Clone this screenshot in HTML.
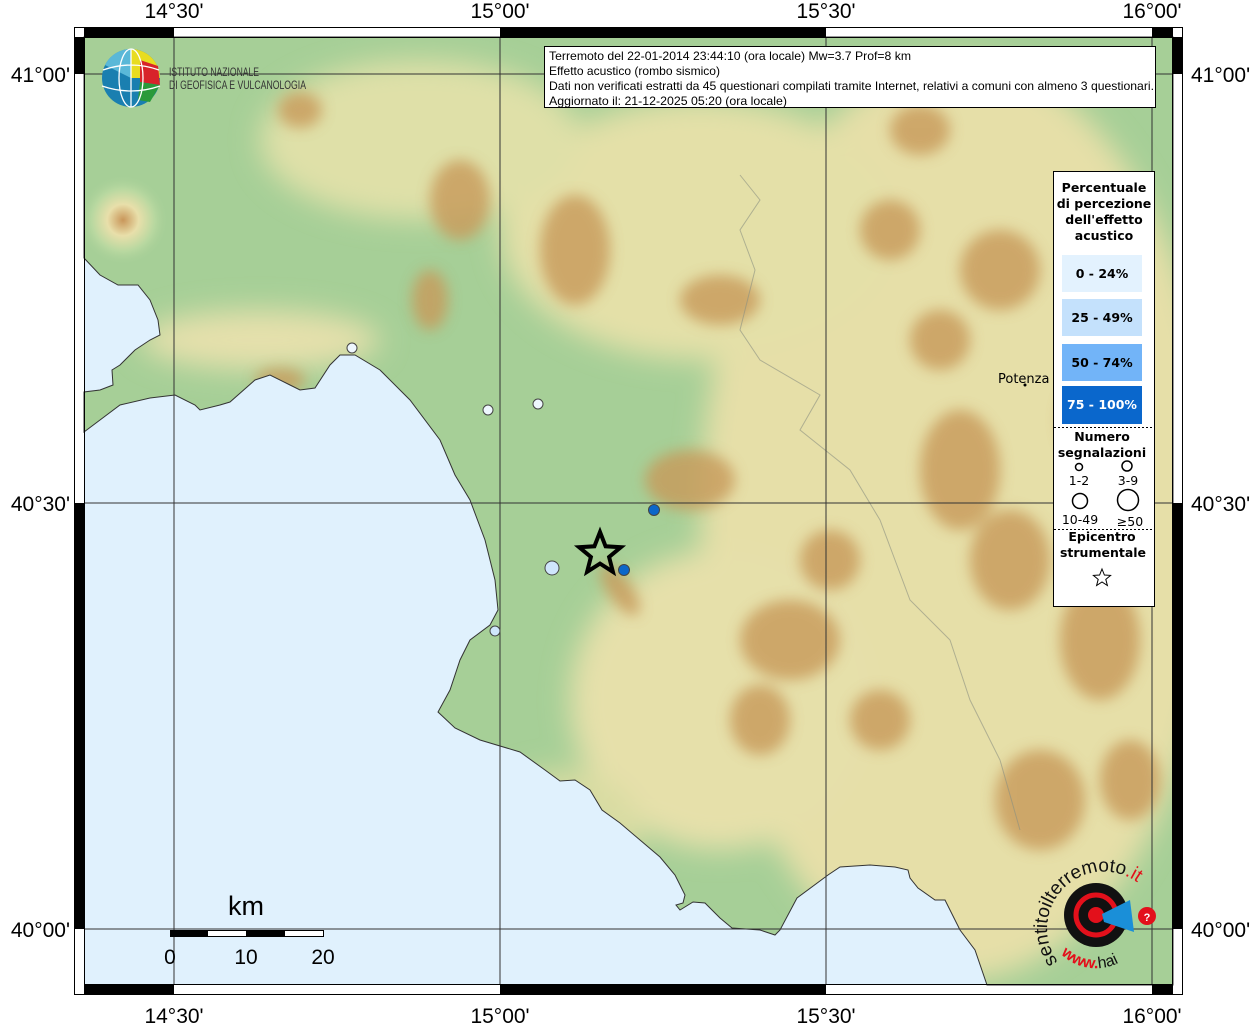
<!DOCTYPE html>
<html><head><meta charset="utf-8"><style>
html,body{margin:0;padding:0;background:#fff;width:1256px;height:1024px;overflow:hidden}
svg{display:block;font-family:"Liberation Sans",sans-serif}
.dj{font-family:"DejaVu Sans",sans-serif}
.nr{font-family:"Liberation Sans Narrow","Liberation Sans",sans-serif}
</style></head><body>
<svg width="1256" height="1024" viewBox="0 0 1256 1024" xmlns="http://www.w3.org/2000/svg">
<defs>
<filter id="b1" x="-50%" y="-50%" width="200%" height="200%"><feGaussianBlur stdDeviation="14"/></filter>
<filter id="b2" x="-50%" y="-50%" width="200%" height="200%"><feGaussianBlur stdDeviation="7"/></filter>
<clipPath id="land"><path id="lp" d="M84,37 L1173,37 L1173,985 L987,985 L975,950 L960,930 L945,900 L935,900 L918,888 L910,878 L908,870 L895,867 L870,865 L840,867 L828,875 L797,898 L780,930 L775,935 L760,930 L732,928 L720,918 L705,903 L693,902 L680,910 L676,905 L683,903 L685,895 L675,875 L660,857 L640,840 L620,823 L602,810 L590,790 L575,780 L560,781 L545,770 L520,752 L480,740 L455,728 L438,712 L450,690 L460,660 L470,640 L490,625 L498,610 L495,580 L485,540 L470,500 L455,475 L440,440 L410,400 L380,370 L355,355 L340,355 L330,365 L315,388 L300,390 L290,385 L270,375 L255,380 L230,402 L220,405 L200,410 L195,405 L175,395 L150,398 L120,405 L100,420 L84,432 L84,392 L100,390 L113,385 L112,370 L120,365 L135,350 L150,340 L160,335 L158,320 L150,300 L138,285 L118,285 L100,275 L84,258 Z"/></clipPath>
<radialGradient id="vol" cx="0.5" cy="0.5" r="0.5"><stop offset="0" stop-color="#c9965a"/><stop offset="0.35" stop-color="#e8dfaa"/><stop offset="0.7" stop-color="#b8d8a0"/><stop offset="1" stop-color="#a8cf98" stop-opacity="0"/></radialGradient>
</defs>
<rect x="84" y="37" width="1089" height="948" fill="#e0f1fd"/>
<g clip-path="url(#land)">
<rect x="84" y="37" width="1089" height="948" fill="#a6cf97"/>
<g filter="url(#b1)">
<ellipse cx="960" cy="520" rx="260" ry="460" fill="#e6dfa8"/>
<ellipse cx="700" cy="230" rx="200" ry="130" fill="#e4e0a8"/>
<ellipse cx="720" cy="700" rx="150" ry="150" fill="#e6e0aa"/>
<ellipse cx="420" cy="140" rx="160" ry="80" fill="#dfe0a8"/>
<ellipse cx="260" cy="340" rx="120" ry="30" fill="#e5e0ac"/>
<ellipse cx="560" cy="830" rx="80" ry="60" fill="#d8dca2"/>
</g>
<g filter="url(#b2)" fill="#c89a5a" opacity="0.8">
<ellipse cx="460" cy="200" rx="30" ry="40"/>
<ellipse cx="575" cy="250" rx="35" ry="55"/>
<ellipse cx="300" cy="110" rx="22" ry="18"/>
<ellipse cx="720" cy="300" rx="40" ry="25"/>
<ellipse cx="690" cy="480" rx="45" ry="30"/>
<ellipse cx="790" cy="640" rx="50" ry="40"/>
<ellipse cx="760" cy="720" rx="30" ry="35"/>
<ellipse cx="960" cy="470" rx="40" ry="60"/>
<ellipse cx="1010" cy="560" rx="40" ry="50"/>
<ellipse cx="1100" cy="640" rx="40" ry="60"/>
<ellipse cx="1040" cy="800" rx="45" ry="50"/>
<ellipse cx="1130" cy="780" rx="30" ry="40"/>
<ellipse cx="890" cy="230" rx="30" ry="30"/>
<ellipse cx="920" cy="130" rx="30" ry="25"/>
<ellipse cx="1000" cy="270" rx="40" ry="40"/>
<ellipse cx="940" cy="340" rx="30" ry="30"/>
<ellipse cx="1100" cy="420" rx="40" ry="50"/>
<ellipse cx="880" cy="720" rx="30" ry="30"/>
<ellipse cx="620" cy="590" rx="12" ry="30" transform="rotate(-35 620 590)"/>
<ellipse cx="280" cy="380" rx="25" ry="12"/>
<ellipse cx="430" cy="300" rx="18" ry="30"/>
<ellipse cx="830" cy="560" rx="30" ry="30"/>
</g>
<circle cx="123" cy="220" r="45" fill="url(#vol)"/>
<polyline points="740,175 760,200 740,230 755,270 740,330 760,360 820,395 800,430 850,470 880,520 910,600 950,640 970,700 1000,760 1020,830" fill="none" stroke="#8a8f80" stroke-width="1" opacity="0.6"/>
</g>
<use href="#lp" fill="none" stroke="#333" stroke-width="1"/>
<g stroke="#333" stroke-width="1">
<line x1="174" y1="37" x2="174" y2="985"/><line x1="500" y1="37" x2="500" y2="985"/><line x1="826" y1="37" x2="826" y2="985"/><line x1="1152" y1="37" x2="1152" y2="985"/>
<line x1="84" y1="74" x2="1173" y2="74"/><line x1="84" y1="503" x2="1173" y2="503"/><line x1="84" y1="929" x2="1173" y2="929"/>
</g>
<rect x="74.5" y="27.5" width="1108" height="967" fill="none" stroke="#000" stroke-width="1"/>
<rect x="84.5" y="37.5" width="1088" height="947" fill="none" stroke="#000" stroke-width="1"/>
<g fill="#000">
<rect x="84" y="27" width="90" height="10"/><rect x="500" y="27" width="326" height="10"/><rect x="1152" y="27" width="21" height="10"/>
<rect x="84" y="985" width="90" height="10"/><rect x="500" y="985" width="326" height="10"/><rect x="1152" y="985" width="21" height="10"/>
<rect x="74" y="37" width="10" height="37"/><rect x="74" y="503" width="10" height="426"/>
<rect x="1173" y="37" width="10" height="37"/><rect x="1173" y="503" width="10" height="426"/>
</g>
<g font-size="21" fill="#000">
<text x="174" y="18" text-anchor="middle">14°30'</text><text x="500" y="18" text-anchor="middle">15°00'</text><text x="826" y="18" text-anchor="middle">15°30'</text><text x="1152" y="18" text-anchor="middle">16°00'</text>
<text x="174" y="1023" text-anchor="middle">14°30'</text><text x="500" y="1023" text-anchor="middle">15°00'</text><text x="826" y="1023" text-anchor="middle">15°30'</text><text x="1152" y="1023" text-anchor="middle">16°00'</text>
<text x="70" y="82" text-anchor="end">41°00'</text><text x="70" y="511" text-anchor="end">40°30'</text><text x="70" y="937" text-anchor="end">40°00'</text>
<text x="1191" y="82">41°00'</text><text x="1191" y="511">40°30'</text><text x="1191" y="937">40°00'</text>
</g>
<circle cx="131" cy="78" r="29" fill="#1a7fb0"/>
<path d="M131,49 A29,29 0 0 1 160,78 L131,78 Z" fill="#e8dc20"/>
<path d="M140,60 L158,66 L160,85 L140,82 Z" fill="#d8232a"/>
<path d="M140,82 L160,85 L150,102 L138,100 Z" fill="#2a9a3a"/>
<path d="M131,49 A29,29 0 0 0 105,65 L131,78 Z" fill="#5ab8d8"/>
<g stroke="#fff" stroke-width="1.3" fill="none"><ellipse cx="131" cy="78" rx="12" ry="29"/><path d="M103,70 Q131,60 159,70 M102,86 Q131,96 160,86 M131,49 V107"/></g>
<text class="nr" x="169" y="76" font-size="12" fill="#333" textLength="90" lengthAdjust="spacingAndGlyphs">ISTITUTO NAZIONALE</text>
<text class="nr" x="169" y="89" font-size="12" fill="#333" textLength="137" lengthAdjust="spacingAndGlyphs">DI GEOFISICA E VULCANOLOGIA</text>
<rect x="544.5" y="46.5" width="611" height="61" fill="#fff" stroke="#000"/>
<g font-size="12" fill="#000">
<text x="549" y="60" textLength="362" lengthAdjust="spacingAndGlyphs">Terremoto del 22-01-2014 23:44:10 (ora locale) Mw=3.7 Prof=8 km</text>
<text x="549" y="75" textLength="171" lengthAdjust="spacingAndGlyphs">Effetto acustico (rombo sismico)</text>
<text x="549" y="90" textLength="605" lengthAdjust="spacingAndGlyphs">Dati non verificati estratti da 45 questionari compilati tramite Internet, relativi a comuni con almeno 3 questionari.</text>
<text x="549" y="105" textLength="238" lengthAdjust="spacingAndGlyphs">Aggiornato il: 21-12-2025 05:20 (ora locale)</text>
</g>
<text class="dj" x="998" y="383" font-size="13" fill="#000">Potenza</text><circle cx="1025" cy="385" r="1.5" fill="#000"/>
<g stroke="#444" stroke-width="1">
<circle cx="352" cy="348" r="5" fill="#eef7fe"/>
<circle cx="488" cy="410" r="5" fill="#eef7fe"/>
<circle cx="538" cy="404" r="5" fill="#eef7fe"/>
<circle cx="654" cy="510" r="5.5" fill="#0b67c9"/>
<circle cx="624" cy="570" r="5.5" fill="#0b67c9"/>
<circle cx="552" cy="568" r="7" fill="#cfe6fc"/>
<circle cx="495" cy="631" r="5" fill="#cfe6fc"/>
</g>
<polygon points="600,532 605.6,546.3 620.9,547.2 609.1,557 612.9,571.8 600,563.6 587.1,571.8 590.9,557 579.1,547.2 594.4,546.3" fill="none" stroke="#000" stroke-width="4"/>
<rect x="1053.5" y="171.5" width="101" height="435" fill="#fff" stroke="#000"/>
<g class="dj" font-size="12.5" font-weight="bold" fill="#000" text-anchor="middle">
<text x="1104" y="192">Percentuale</text>
<text x="1104" y="208">di percezione</text>
<text x="1104" y="224">dell'effetto</text>
<text x="1104" y="240">acustico</text>
<rect x="1062" y="255" width="80" height="37" fill="#e3f2fe"/><text x="1102" y="278">0 - 24%</text>
<rect x="1062" y="299" width="80" height="37" fill="#c4e1fc"/><text x="1102" y="322">25 - 49%</text>
<rect x="1062" y="344" width="80" height="37" fill="#72b4f8"/><text x="1102" y="367">50 - 74%</text>
<rect x="1062" y="386" width="80" height="38" fill="#0a67cc"/><text x="1102" y="409" fill="#fff">75 - 100%</text>
<line x1="1054" y1="427.5" x2="1154" y2="427.5" stroke="#000" stroke-dasharray="2,2"/>
<text x="1102" y="441">Numero</text>
<text x="1102" y="457">segnalazioni</text>
<circle cx="1079" cy="467" r="3.5" fill="none" stroke="#000" stroke-width="1.5"/>
<circle cx="1127" cy="466" r="5" fill="none" stroke="#000" stroke-width="1.5"/>
<text x="1079" y="485" font-weight="normal">1-2</text>
<text x="1128" y="485" font-weight="normal">3-9</text>
<circle cx="1080" cy="501" r="7.5" fill="none" stroke="#000" stroke-width="1.5"/>
<circle cx="1128" cy="500" r="10.5" fill="none" stroke="#000" stroke-width="1.5"/>
<text x="1080" y="524" font-weight="normal">10-49</text>
<text x="1130" y="526" font-weight="normal">≥50</text>
<line x1="1054" y1="529.5" x2="1154" y2="529.5" stroke="#000" stroke-dasharray="2,2"/>
<text x="1102" y="541">Epicentro</text>
<text x="1103" y="557">strumentale</text>
</g>
<polygon points="1102,569 1104.4,575 1110.6,575.4 1105.8,579.4 1107.4,585.5 1102,582 1096.6,585.5 1098.2,579.4 1093.4,575.4 1099.6,575" fill="none" stroke="#000" stroke-width="1"/>
<text x="246" y="915" font-size="27" text-anchor="middle">km</text>
<rect x="170.5" y="930.5" width="153" height="6" fill="#fff" stroke="#000"/>
<rect x="170" y="930" width="38" height="7" fill="#000"/><rect x="246" y="930" width="39" height="7" fill="#000"/>
<g font-size="21" text-anchor="middle"><text x="170" y="964">0</text><text x="246" y="964">10</text><text x="323" y="964">20</text></g>
<path id="arcT" d="M1058,962 A52,52 0 1 1 1150,895" fill="none"/>
<path id="arcB" d="M1046,915 A50,50 0 0 0 1143,935" fill="none"/>
<text font-size="19" fill="#111"><textPath href="#arcT">sentito<tspan>il</tspan>terremoto<tspan fill="#e3101b">.it</tspan></textPath></text>
<text font-size="16" fill="#e3101b" font-weight="bold"><textPath href="#arcB" startOffset="30%" side="left">www.<tspan fill="#111" font-weight="normal">hai</tspan></textPath></text>
<circle cx="1096" cy="915" r="32" fill="#111"/>
<circle cx="1096" cy="915" r="20" fill="none" stroke="#e3101b" stroke-width="5"/>
<circle cx="1096" cy="915" r="8" fill="#e3101b"/>
<polygon points="1102,914 1130,900 1134,932 1104,922" fill="#1a8fd8"/>
<circle cx="1147" cy="916" r="9" fill="#e3101b"/><text x="1147" y="921" font-size="11" fill="#fff" font-weight="bold" text-anchor="middle">?</text>
</svg>
</body></html>
